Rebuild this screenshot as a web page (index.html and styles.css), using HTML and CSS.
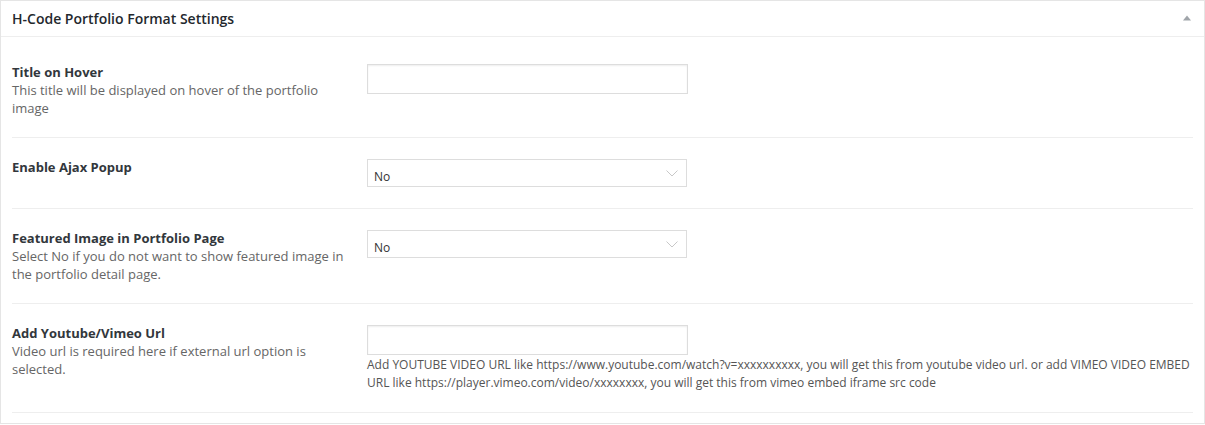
FILE: index.html
```html
<!DOCTYPE html>
<html>
<head>
<meta charset="utf-8">
<link rel="stylesheet" href="styles.css">
</head>
<body>
<div class="postbox">
  <div class="hndle">
    <h2 class="title">H-Code Portfolio Format Settings</h2>
    <svg class="toggle" width="8" height="6" viewBox="0 0 8 6"><path d="M0 5.5 L4 0.5 L8 5.5 Z" fill="#a0a5aa"/></svg>
  </div>
  <div class="inside">
    <div class="row">
      <div class="label-col">
        <div class="label">Title on Hover</div>
        <div class="desc">This title will be displayed on hover of the portfolio image</div>
      </div>
      <div class="field-col">
        <div class="input"></div>
      </div>
    </div>
    <div class="row">
      <div class="label-col">
        <div class="label">Enable Ajax Popup</div>
      </div>
      <div class="field-col">
        <div class="select"><span>No</span><svg class="chev" width="12" height="7" viewBox="0 0 12 7"><path d="M0.5 0.5 L6 6 L11.5 0.5" fill="none" stroke="#c8c8c8" stroke-width="1"/></svg></div>
      </div>
    </div>
    <div class="row">
      <div class="label-col">
        <div class="label">Featured Image in Portfolio Page</div>
        <div class="desc">Select No if you do not want to show featured image in the portfolio detail page.</div>
      </div>
      <div class="field-col">
        <div class="select"><span>No</span><svg class="chev" width="12" height="7" viewBox="0 0 12 7"><path d="M0.5 0.5 L6 6 L11.5 0.5" fill="none" stroke="#c8c8c8" stroke-width="1"/></svg></div>
      </div>
    </div>
    <div class="row">
      <div class="label-col">
        <div class="label">Add Youtube/Vimeo Url</div>
        <div class="desc">Video url is required here if external url option is selected.</div>
      </div>
      <div class="field-col">
        <div class="input"></div>
        <p class="help">Add YOUTUBE VIDEO URL like https://www.youtube.com/watch?v=xxxxxxxxxx, you will get this from youtube video url. or add VIMEO VIDEO EMBED URL like https://player.vimeo.com/video/xxxxxxxx, you will get this from vimeo embed iframe src code</p>
      </div>
    </div>
  </div>
</div>
</body>
</html>
```
FILE: styles.css
```css
html, body {
  margin: 0;
  padding: 0;
  background: #fff;
}
body {
  font-family: "Open Sans", "Liberation Sans", sans-serif;
  font-size: 13px;
  color: #444;
}
.postbox {
  width: 1205px;
  height: 424px;
  box-sizing: border-box;
  border: 1px solid #e5e5e5;
  background: #fff;
}
.hndle {
  display: flex;
  align-items: center;
  justify-content: space-between;
  height: 35px;
  padding: 0 13px 0 11px;
  border-bottom: 1px solid #eee;
}
.title {
  margin: 0;
  font-size: 14px;
  font-weight: 600;
  color: #23282d;
  line-height: 20px;
}
.toggle {
  display: block;
  margin-top: -1px;
}
.inside {
  margin-top: 6px;
  padding: 0 11px 0 11px;
}
.row {
  display: grid;
  grid-template-columns: 355px 1fr;
  padding: 20px 0;
  border-bottom: 1px solid #eee;
}
.label {
  font-weight: 700;
  color: #32373c;
  line-height: 18px;
}
.desc {
  color: #666;
  line-height: 18px;
  padding-right: 20px;
}
.input {
  width: 321px;
  height: 30px;
  margin: 1px 0;
  box-sizing: border-box;
  border: 1px solid #ddd;
  box-shadow: inset 0 1px 2px rgba(0,0,0,0.07);
  background: #fff;
}
.select {
  width: 320px;
  height: 28px;
  margin: 1px 0;
  box-sizing: border-box;
  border: 1px solid #ddd;
  display: flex;
  align-items: center;
  justify-content: space-between;
  padding: 7px 8px 0 6px;
  font-size: 12px;
  color: #333;
}
.chev {
  display: block;
  margin-top: -6px;
}
.help {
  margin: 0;
  font-size: 12px;
  line-height: 18px;
  color: #555;
}
```
